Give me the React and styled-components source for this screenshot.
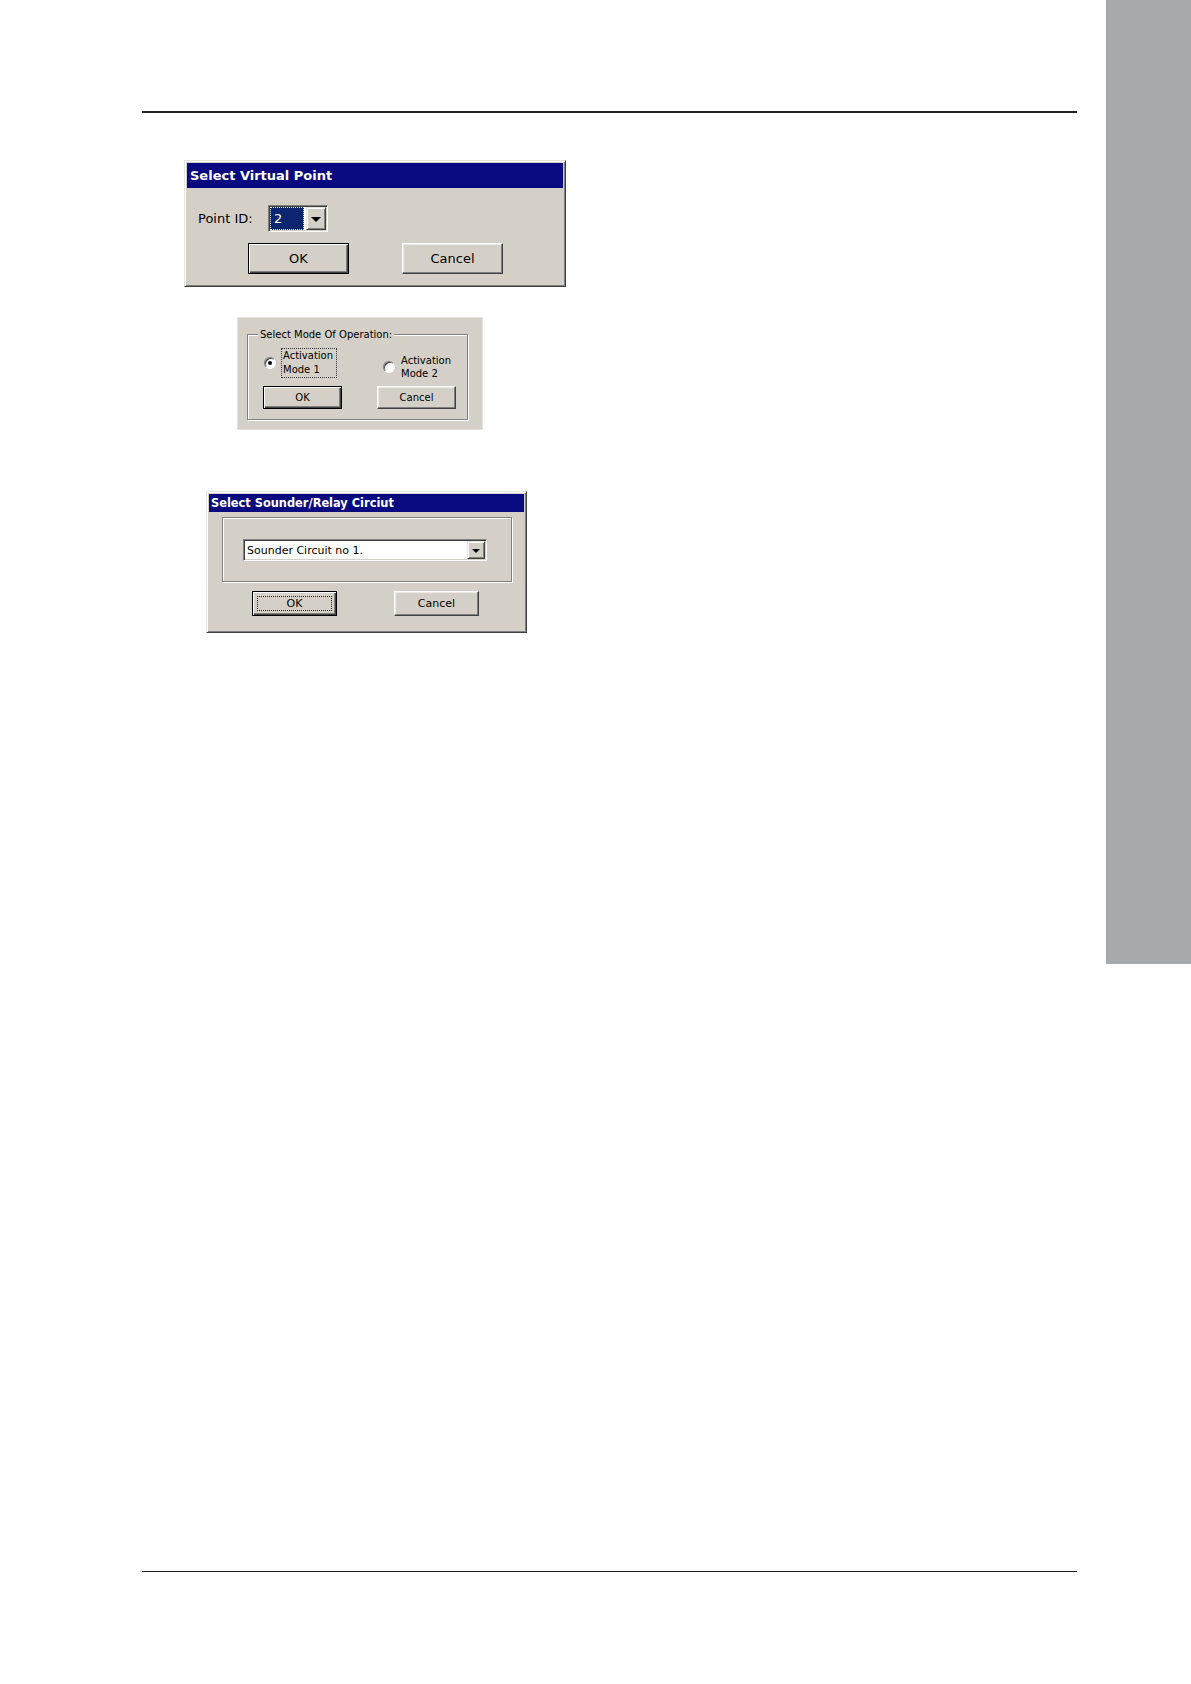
import React from "react";
import styled, { createGlobalStyle, css } from "styled-components";

const Global = createGlobalStyle`
  html, body { margin: 0; padding: 0; background: #fff; }
  body { font-family: "DejaVu Sans", Verdana, sans-serif; color: #000; }
`;

const FACE = "#d4d0c8";

const Page = styled.div`
  display: flex;
  width: 1191px;
  height: 1684px;
  background: #fff;
`;

const Main = styled.main`
  box-sizing: border-box;
  width: 1106px;
  flex: none;
  padding: 111px 29px 112px 142px;
  display: flex;
  flex-direction: column;
`;

const Rule = styled.div`
  flex: none;
  width: 935px;
  height: ${(p) => p.$thick}px;
  background: #231f20;
  margin-top: ${(p) => (p.$bottom ? "auto" : "0")};
`;

const Sidebar = styled.aside`
  flex: none;
  width: 85px;
  height: 964px;
  background: #a8a9ad;
`;

const Win = styled.div`
  box-sizing: border-box;
  flex: none;
  width: ${(p) => p.$w}px;
  height: ${(p) => p.$h}px;
  margin: ${(p) => p.$mt}px 0 0 ${(p) => p.$ml}px;
  background: ${FACE};
  border: 1px solid;
  border-color: #e6e4de #404040 #404040 #e6e4de;
  box-shadow: inset 1px 1px #fff, inset -1px -1px #808080;
  padding: 2px;
  display: flex;
  flex-direction: column;
`;

const TitleBar = styled.div`
  flex: none;
  height: ${(p) => p.$h}px;
  background: #0a0a80;
  color: #fff;
  font-weight: bold;
  font-size: ${(p) => p.$fs}px;
  padding-left: ${(p) => p.$pl}px;
  display: flex;
  align-items: center;
  white-space: nowrap;
`;

const FieldRow = styled.div`
  display: flex;
  align-items: center;
  margin-top: ${(p) => p.$mt}px;
  padding-left: ${(p) => p.$pl}px;
  gap: ${(p) => p.$gap}px;
`;

const Label = styled.span`
  display: inline-block;
  width: ${(p) => p.$w}px;
  font-size: ${(p) => p.$fs}px;
  white-space: nowrap;
`;

const Combo = styled.div`
  box-sizing: border-box;
  width: ${(p) => p.$w}px;
  height: ${(p) => p.$h}px;
  background: #fff;
  border: 1px solid;
  border-color: #808080 #fff #fff #808080;
  box-shadow: inset 1px 1px #404040, inset -1px -1px ${FACE};
  padding: 1px;
  display: flex;
  align-items: stretch;
`;

const ComboValue = styled.div`
  flex: 1;
  display: flex;
  align-items: center;
  font-size: ${(p) => p.$fs}px;
  padding-left: ${(p) => p.$pl}px;
  white-space: nowrap;
  ${(p) =>
    p.$selected &&
    css`
      box-sizing: border-box;
      margin-right: 2px;
      background: #0b2570;
      color: #fff;
      border: 1px dotted #f4f0c0;
    `}
`;

const ComboButton = styled.div`
  box-sizing: border-box;
  flex: none;
  width: ${(p) => p.$w}px;
  background: ${FACE};
  border: 1px solid;
  border-color: #e6e4de #404040 #404040 #e6e4de;
  box-shadow: inset 1px 1px #fff, inset -1px -1px #808080;
  display: flex;
  align-items: center;
  justify-content: center;
`;

const Arrow = styled.span`
  width: 0;
  height: 0;
  border-left: ${(p) => p.$s}px solid transparent;
  border-right: ${(p) => p.$s}px solid transparent;
  border-top: ${(p) => p.$s}px solid #000;
  margin-top: 1px;
`;

const ButtonRow = styled.div`
  display: flex;
  margin-top: ${(p) => p.$mt}px;
  padding-left: ${(p) => p.$pl}px;
  gap: ${(p) => p.$gap}px;
`;

const Btn = styled.button`
  box-sizing: border-box;
  width: ${(p) => p.$w}px;
  height: ${(p) => p.$h}px;
  padding: 0;
  margin: 0;
  font-family: inherit;
  font-size: ${(p) => p.$fs}px;
  color: #000;
  background: ${FACE};
  display: flex;
  align-items: center;
  justify-content: center;
  border: 1px solid;
  border-color: #fff #404040 #404040 #fff;
  box-shadow: inset -1px -1px #808080, inset 1px 1px #ece9e3;
  ${(p) =>
    p.$default &&
    css`
      border-color: #000;
      box-shadow: inset 1px 1px #fff, inset -1px -1px #404040, inset -2px -2px #808080;
    `}
`;

const FocusRing = styled.span`
  box-sizing: border-box;
  width: calc(100% - 8px);
  height: calc(100% - 8px);
  border: 1px dotted #222;
  display: flex;
  align-items: center;
  justify-content: center;
`;

/* Dialog 2 */
const Panel = styled.div`
  box-sizing: border-box;
  flex: none;
  width: 246px;
  height: 113px;
  margin: 30px 0 0 95px;
  background: ${FACE};
  border: 1px solid #e2e0da;
  padding: 10px 14px 0 9px;
`;

const Group = styled.fieldset`
  margin: 0;
  padding: 0;
  min-width: 0;
  border: 1px solid #808080;
  box-shadow: inset 1px 1px #fff, 1px 1px #fff;
`;

const Legend = styled.legend`
  font-size: 10px;
  line-height: 13px;
  padding: 0 2px;
  margin-left: 10px;
  background: ${FACE};
  white-space: nowrap;
`;

const GroupBody = styled.div`
  padding: 7px 0 10px 0;
`;

const OptionRow = styled.div`
  display: flex;
  align-items: flex-start;
  padding-left: 16px;
  gap: 46px;
`;

const Option = styled.label`
  display: flex;
  align-items: center;
  gap: ${(p) => p.$gap}px;
  padding-top: ${(p) => p.$pt}px;
  font-size: 10px;
`;

const Radio = styled.span`
  box-sizing: border-box;
  width: 12px;
  height: 12px;
  border-radius: 50%;
  background: #fff;
  border: 1px solid;
  border-color: #808080 #fff #fff #808080;
  box-shadow: inset 1px 1px #404040, 0 0 0 0.5px #c8c4bc;
  display: flex;
  align-items: center;
  justify-content: center;
  &::after {
    content: "";
    width: 4px;
    height: 4px;
    border-radius: 50%;
    background: ${(p) => (p.$checked ? "#000" : "transparent")};
  }
`;

const OptionText = styled.span`
  box-sizing: border-box;
  width: ${(p) => p.$w}px;
  line-height: ${(p) => p.$lh}px;
  padding: 0 1px;
  border: 1px ${(p) => (p.$focus ? "dotted #333" : "solid transparent")};
`;

/* Dialog 3 */
const Etched = styled.div`
  box-sizing: border-box;
  width: 290px;
  height: 65px;
  margin: 5px 0 0 13px;
  border: 1px solid #808080;
  box-shadow: inset 1px 1px #fff, 1px 1px #fff;
  padding: 21px 0 0 20px;
`;

export default function App() {
  return (
    <>
      <Global />
      <Page>
        <Main>
          <Rule $thick={2} />

          <Win $w={382} $h={127} $mt={47} $ml={42}>
            <TitleBar $h={25} $fs={13} $pl={3}>
              Select Virtual Point
            </TitleBar>
            <FieldRow $mt={17} $pl={11} $gap={14}>
              <Label $w={56} $fs={13}>
                Point ID:
              </Label>
              <Combo $w={60} $h={27}>
                <ComboValue $selected $fs={13} $pl={3}>
                  2
                </ComboValue>
                <ComboButton $w={20}>
                  <Arrow $s={5} />
                </ComboButton>
              </Combo>
            </FieldRow>
            <ButtonRow $mt={11} $pl={61} $gap={53}>
              <Btn $default $w={101} $h={31} $fs={13}>
                OK
              </Btn>
              <Btn $w={101} $h={31} $fs={13}>
                Cancel
              </Btn>
            </ButtonRow>
          </Win>

          <Panel>
            <Group>
              <Legend>Select Mode Of Operation:</Legend>
              <GroupBody>
                <OptionRow>
                  <Option $pt={0} $gap={5}>
                    <Radio $checked />
                    <OptionText $focus $w={56} $lh={14}>
                      Activation
                      <br />
                      Mode 1
                    </OptionText>
                  </Option>
                  <Option $pt={5} $gap={4}>
                    <Radio />
                    <OptionText $w={60} $lh={13}>
                      Activation
                      <br />
                      Mode 2
                    </OptionText>
                  </Option>
                </OptionRow>
                <ButtonRow $mt={5} $pl={15} $gap={35}>
                  <Btn $default $w={79} $h={23} $fs={10}>
                    OK
                  </Btn>
                  <Btn $w={79} $h={23} $fs={10}>
                    Cancel
                  </Btn>
                </ButtonRow>
              </GroupBody>
            </Group>
          </Panel>

          <Win $w={321} $h={142} $mt={61} $ml={64}>
            <TitleBar $h={18} $fs={11.4} $pl={2}>
              Select Sounder/Relay Circiut
            </TitleBar>
            <Etched>
              <Combo $w={244} $h={22}>
                <ComboValue $fs={11} $pl={2}>
                  Sounder Circuit no 1.
                </ComboValue>
                <ComboButton $w={18}>
                  <Arrow $s={4} />
                </ComboButton>
              </Combo>
            </Etched>
            <ButtonRow $mt={9} $pl={43} $gap={57}>
              <Btn $default $w={85} $h={25} $fs={11}>
                <FocusRing>OK</FocusRing>
              </Btn>
              <Btn $w={85} $h={25} $fs={11}>
                Cancel
              </Btn>
            </ButtonRow>
          </Win>

          <Rule $thick={1} $bottom />
        </Main>
        <Sidebar />
      </Page>
    </>
  );
}
